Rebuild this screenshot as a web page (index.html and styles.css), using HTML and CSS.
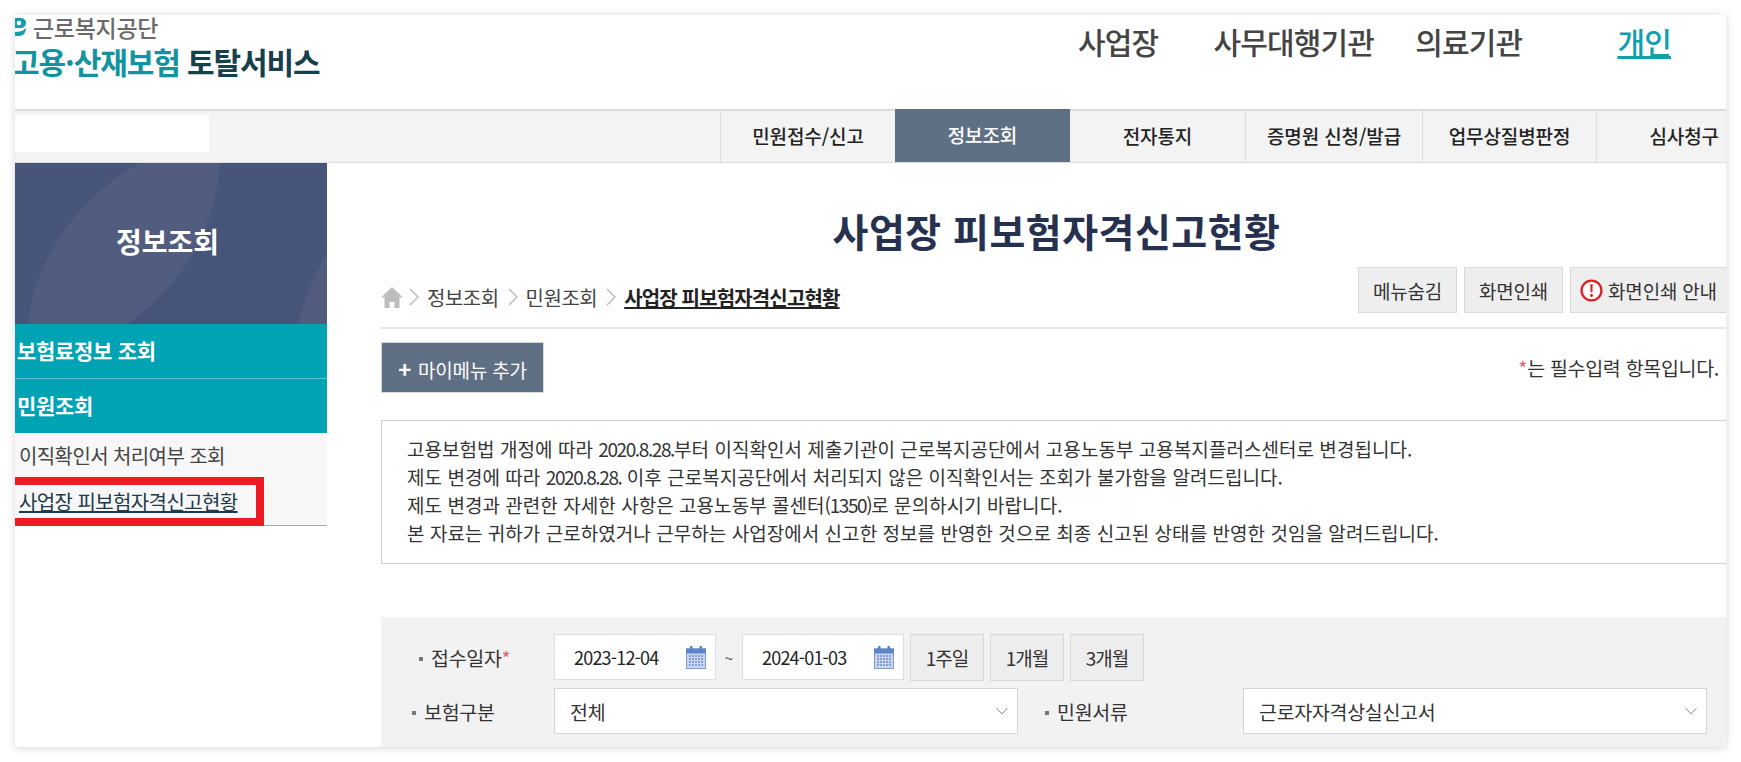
FILE: index.html
```html
<!DOCTYPE html>
<html lang="ko">
<head>
    <meta charset="UTF-8">
    <meta name="viewport" content="width=device-width, initial-scale=1.0">
    <title>사업장 피보험자격신고현황</title>
    <link rel="stylesheet" href="styles.css">
</head>
<body>
    <div class="page">
        <header class="top">
            <div class="logo">
                <div class="logo-org">
                    <svg class="logo-mark" width="11" height="20" viewBox="0 0 11 20">
                        <path d="M0 1h5c4 0 6 2 6 5s-2 4-4 5H0z" fill="#12a0ad"/>
                        <path d="M0 15c4 0 8-1 11-4 0 5-3 8-7 8H0z" fill="#12a0ad"/>
                        <circle cx="4" cy="6" r="2.2" fill="#fff"/>
                    </svg>
                    <span>근로복지공단</span>
                </div>
                <div class="logo-name"><span class="logo-teal">고용·산재보험</span> 토탈서비스</div>
            </div>
            <nav class="top-links">
                <a class="top-link link-biz">사업장</a>
                <a class="top-link link-agency">사무대행기관</a>
                <a class="top-link link-medical">의료기관</a>
                <a class="top-link link-person">개인</a>
            </nav>
        </header>

        <nav class="gnb">
            <div class="gnb-blank"></div>
            <ul class="gnb-list">
                <li class="gnb-item item-report">민원접수/신고</li>
                <li class="gnb-item item-info active">정보조회</li>
                <li class="gnb-item item-notice">전자통지</li>
                <li class="gnb-item item-proof">증명원 신청/발급</li>
                <li class="gnb-item item-disease">업무상질병판정</li>
                <li class="gnb-item item-claim">심사청구</li>
            </ul>
        </nav>

        <div class="body-wrap">
            <aside class="side">
                <div class="side-title">
                    <svg class="side-shape" width="312" height="161" viewBox="0 0 312 161">
                        <path d="M125 0C70 30 20 90 13 161H112C165 125 200 70 205 0z" fill="#525c7e"/>
                        <path d="M312 90C298 115 288 138 283 161H312z" fill="#525c7e"/>
                    </svg>
                    <span>정보조회</span>
                </div>
                <div class="side-head">보험료정보 조회</div>
                <div class="side-head side-head-last">민원조회</div>
                <ul class="side-sub">
                    <li>이직확인서 처리여부 조회</li>
                    <li class="side-current"><a>사업장 피보험자격신고현황</a></li>
                </ul>
            </aside>

            <main class="content">
                <h1 class="page-title">사업장 피보험자격신고현황</h1>

                <div class="tool-row">
                    <div class="crumbs">
                        <svg class="home" width="22" height="22" viewBox="0 0 22 22">
                            <path d="M11 1L0 11.5h3.500V22h5v-6h5v6h5V11.500H22z" fill="#bdbdbd"/>
                        </svg>
                        <svg class="crumb-arrow" width="10" height="18" viewBox="0 0 10 18"><path d="M1 1l8 8-8 8" fill="none" stroke="#bbb" stroke-width="1.500"/></svg>
                        <span>정보조회</span>
                        <svg class="crumb-arrow" width="10" height="18" viewBox="0 0 10 18"><path d="M1 1l8 8-8 8" fill="none" stroke="#bbb" stroke-width="1.500"/></svg>
                        <span>민원조회</span>
                        <svg class="crumb-arrow" width="10" height="18" viewBox="0 0 10 18"><path d="M1 1l8 8-8 8" fill="none" stroke="#bbb" stroke-width="1.500"/></svg>
                        <strong>사업장 피보험자격신고현황</strong>
                    </div>
                    <div class="tools">
                        <button class="tool-btn btn-hide">메뉴숨김</button>
                        <button class="tool-btn btn-print">화면인쇄</button>
                        <button class="tool-btn btn-guide">
                            <svg width="23" height="23" viewBox="0 0 22 22">
                                <circle cx="11" cy="11" r="9.500" fill="#fff" stroke="#e01f26" stroke-width="2.200"/>
                                <path d="M9.800 5h2.400l-.4 8h-1.600z" fill="#e01f26"/>
                                <circle cx="11" cy="15.800" r="1.400" fill="#e01f26"/>
                            </svg>
                            화면인쇄 안내
                        </button>
                    </div>
                </div>

                <div class="my-row">
                    <button class="my-btn"><b>+</b> 마이메뉴 추가</button>
                    <p class="req-note"><span class="req">*</span>는 필수입력 항목입니다.</p>
                </div>

                <div class="notice">
                    <p>고용보험법 개정에 따라 <span class="num">2020.8.28.</span>부터 이직확인서 제출기관이 근로복지공단에서 고용노동부 고용복지플러스센터로 변경됩니다.</p>
                    <p>제도 변경에 따라 <span class="num">2020.8.28.</span> 이후 근로복지공단에서 처리되지 않은 이직확인서는 조회가 불가함을 알려드립니다.</p>
                    <p>제도 변경과 관련한 자세한 사항은 고용노동부 콜센터<span class="num">(1350)</span>로 문의하시기 바랍니다.</p>
                    <p>본 자료는 귀하가 근로하였거나 근무하는 사업장에서 신고한 정보를 반영한 것으로 최종 신고된 상태를 반영한 것임을 알려드립니다.</p>
                </div>

                <form class="search">
                    <div class="search-row">
                        <label class="field-label label-date">접수일자<span class="req-star">*</span></label>
                        <div class="date-box">
                            <span>2023-12-04</span>
                            <svg width="20" height="23" viewBox="0 0 20 23">
                                <rect x="0.500" y="3" width="19" height="19.500" fill="#c9d6ee" stroke="#7f9ccf"/>
                                <rect x="0" y="2.500" width="20" height="5" fill="#5f85c8"/>
                                <rect x="4" y="0" width="2.500" height="5" fill="#5f85c8"/>
                                <rect x="13.500" y="0" width="2.500" height="5" fill="#5f85c8"/>
                                <path d="M3 10h14M3 13h14M3 16h14M3 19h14" stroke="#6f8fc8" stroke-width="1.500" stroke-dasharray="2 1"/>
                            </svg>
                        </div>
                        <span class="tilde">~</span>
                        <div class="date-box">
                            <span>2024-01-03</span>
                            <svg width="20" height="23" viewBox="0 0 20 23">
                                <rect x="0.500" y="3" width="19" height="19.500" fill="#c9d6ee" stroke="#7f9ccf"/>
                                <rect x="0" y="2.500" width="20" height="5" fill="#5f85c8"/>
                                <rect x="4" y="0" width="2.500" height="5" fill="#5f85c8"/>
                                <rect x="13.500" y="0" width="2.500" height="5" fill="#5f85c8"/>
                                <path d="M3 10h14M3 13h14M3 16h14M3 19h14" stroke="#6f8fc8" stroke-width="1.500" stroke-dasharray="2 1"/>
                            </svg>
                        </div>
                        <button type="button" class="period-btn">1주일</button>
                        <button type="button" class="period-btn">1개월</button>
                        <button type="button" class="period-btn">3개월</button>
                    </div>
                    <div class="search-row row-selects">
                        <label class="field-label label-type">보험구분</label>
                        <div class="select-box select-type">
                            <span>전체</span>
                            <svg width="12" height="8" viewBox="0 0 12 8"><path d="M.5 1l5.500 6 5.500-6" fill="none" stroke="#888" stroke-width="1"/></svg>
                        </div>
                        <label class="field-label label-doc">민원서류</label>
                        <div class="select-box select-doc">
                            <span>근로자자격상실신고서</span>
                            <svg width="12" height="8" viewBox="0 0 12 8"><path d="M.5 1l5.500 6 5.500-6" fill="none" stroke="#888" stroke-width="1"/></svg>
                        </div>
                    </div>
                </form>
            </main>
        </div>
    </div>
</body>
</html>
```

FILE: styles.css
```css
* {
    margin: 0;
    padding: 0;
    box-sizing: border-box;
    font-family: "Noto Sans CJK KR", "Noto Sans", sans-serif;
}

html, body {
    height: 100%;
    background-color: #ffffff;
    overflow: hidden;
}

body {
    padding: 15px;
}

ul {
    list-style: none;
}

button {
    cursor: pointer;
}

.page {
    width: 1711px;
    height: 732px;
    overflow: hidden;
    background-color: #fff;
    box-shadow: 0px 1px 8px rgba(0, 0, 0, 0.16);
}

/* header */
.top {
    display: flex;
    height: 96px;
    border-bottom: 2px solid #dddddd;
    overflow: hidden;
}

.logo {
    width: 420px;
    margin-left: -3px;
}

.logo-org {
    display: flex;
    align-items: center;
    height: 24px;
    font-size: 23px;
    font-weight: 500;
    line-height: 24px;
    letter-spacing: -0.3px;
    color: #6a6a6a;
}

.logo-mark {
    margin-left: 3px;
    margin-right: 7px;
}

.logo-name {
    margin-top: 3px;
    font-size: 30px;
    font-weight: 700;
    line-height: 38px;
    letter-spacing: -1.1px;
    color: #17404d;
}

.logo-teal {
    color: #13929f;
}

.top-links {
    display: flex;
    margin-left: auto;
}

.top-link {
    font-size: 30px;
    font-weight: 500;
    line-height: 52px;
    letter-spacing: -0.8px;
    color: #444444;
}

.link-biz {
    margin-right: 55px;
}

.link-agency {
    margin-right: 41px;
}

.link-medical {
    margin-right: 95px;
}

.link-person {
    margin-right: 55px;
    color: #0f9fad;
    text-decoration: underline;
}

/* main menu */
.gnb {
    display: flex;
    height: 52px;
    background-color: #f3f3f3;
    border-bottom: 1px solid #dddddd;
}

.gnb-blank {
    width: 194px;
    height: 37px;
    margin-top: 4px;
    background-color: #fff;
}

.gnb-list {
    display: flex;
    margin-left: auto;
}

.gnb-item {
    display: flex;
    align-items: center;
    justify-content: center;
    height: 51px;
    padding-bottom: 3px;
    border-left: 1px solid #dcdcdc;
    font-size: 19px;
    font-weight: 500;
    letter-spacing: -0.1px;
    color: #222;
}

.item-report { width: 175px; }
.item-notice { width: 175px; }
.item-proof { width: 177px; }
.item-disease { width: 174px; }
.item-claim {
    width: 130px;
    justify-content: flex-end;
    padding-right: 7px;
}

.item-info {
    width: 175px;
    margin-top: -2px;
    height: 53px;
}

.gnb-item.active {
    background-color: #5f7084;
    border-left: none;
    color: #fff;
}

.active + .gnb-item {
    border-left: none;
}

/* body */
.body-wrap {
    display: flex;
}

.side {
    width: 312px;
    flex-shrink: 0;
}

.side-title {
    position: relative;
    display: flex;
    align-items: center;
    justify-content: center;
    height: 161px;
    padding-bottom: 6px;
    padding-right: 7px;
    background-color: #48557a;
    font-size: 28px;
    font-weight: 700;
    letter-spacing: 0;
    color: #fff;
}

.side-shape {
    position: absolute;
    left: 0;
    top: 0;
}

.side-title span {
    position: relative;
}

.side-head {
    height: 55px;
    padding-left: 2px;
    background-color: #00a3b4;
    border-bottom: 1px solid #5cc2cc;
    font-size: 21px;
    font-weight: 700;
    line-height: 53px;
    letter-spacing: -0.3px;
    color: #fff;
}

.side-head-last {
    border-bottom: none;
    height: 54px;
}

.side-sub {
    position: relative;
    height: 93px;
    background-color: #f7f7f7;
    border-bottom: 1px solid #aaaaaa;
    font-size: 20px;
    color: #444;
    letter-spacing: -0.6px;
}

.side-sub li {
    height: 46px;
    padding-left: 4px;
    line-height: 46px;
}

.side-current {
    position: relative;
    color: #1d3a4a;
}

.side-current a {
    text-decoration: underline;
}

.side-current::after {
    content: "";
    position: absolute;
    left: -1px;
    top: -2px;
    width: 250px;
    height: 49px;
    box-sizing: border-box;
    border: 8px solid #ed1c24;
    border-left-width: 0;
}

/* content */
.content {
    flex: 1;
    min-width: 0;
    padding-left: 54px;
}

.page-title {
    height: 46px;
    margin-top: 44px;
    padding-left: 6px;
    text-align: center;
    font-size: 39px;
    font-weight: 700;
    line-height: 46px;
    letter-spacing: 0.5px;
    color: #26304f;
}

.tool-row {
    display: flex;
    justify-content: space-between;
    height: 62px;
    margin-top: 14px;
    border-bottom: 2px solid #e6e6e6;
}

.crumbs {
    display: flex;
    align-items: center;
    height: 60px;
    font-size: 20px;
    letter-spacing: -0.5px;
    color: #444;
}

.crumbs strong {
    font-weight: 700;
    letter-spacing: -0.85px;
    color: #222;
    text-decoration: underline;
}

.home {
    margin-right: 6px;
}

.crumb-arrow {
    margin-right: 8px;
}

.crumbs span {
    margin-right: 9px;
}

.tools {
    display: flex;
    gap: 7px;
}

.tool-btn {
    display: flex;
    align-items: center;
    justify-content: center;
    height: 46px;
    background-color: #eeeeee;
    border: 1px solid #d8d8d8;
    font-size: 19px;
    letter-spacing: -0.2px;
    color: #333;
}

.btn-hide,
.btn-print {
    width: 99px;
}

.btn-guide {
    width: 156px;
    gap: 5px;
    border-right: none;
}

.my-row {
    display: flex;
    justify-content: space-between;
    align-items: center;
    margin-top: 13px;
}

.my-btn {
    width: 163px;
    height: 51px;
    background-color: #5f7084;
    border: 1px solid #d5d9de;
    font-size: 19px;
    letter-spacing: -0.2px;
    color: #fff;
}

.my-btn b {
    font-size: 22px;
    margin-right: 2px;
}

.req-note {
    margin-right: 7px;
    margin-top: -1px;
    font-size: 19.500px;
    letter-spacing: -0.3px;
    color: #333;
}

.req {
    color: #e0636a;
}

.notice {
    height: 144px;
    margin-top: 27px;
    padding: 14px 25px;
    border: 1px solid #cfcfcf;
    border-right: none;
    font-size: 19px;
    line-height: 28px;
    letter-spacing: 0.04px;
    color: #333;
}

.num {
    letter-spacing: -1.4px;
}

.search {
    height: 131px;
    margin-top: 53px;
    padding-top: 17px;
    background-color: #f2f2f2;
}

.search-row {
    display: flex;
    align-items: center;
    height: 46px;
}

.row-selects {
    margin-top: 8px;
}

.field-label {
    position: relative;
    font-size: 19.500px;
    letter-spacing: -0.3px;
    color: #333;
}

.field-label::before {
    content: "";
    position: absolute;
    left: -12px;
    top: 14px;
    width: 4px;
    height: 4px;
    background-color: #777;
}

.label-date {
    width: 173px;
    padding-left: 50px;
}

.label-date::before {
    left: 38px;
}

.req-star {
    color: #e0636a;
}

.label-type {
    width: 173px;
    padding-left: 43px;
}

.label-type::before {
    left: 31px;
}

.label-doc {
    width: 225px;
    padding-left: 39px;
}

.label-doc::before {
    left: 27px;
}

.date-box {
    display: flex;
    align-items: center;
    justify-content: space-between;
    width: 162px;
    height: 46px;
    padding: 0 9px 0 19px;
    background-color: #fff;
    border: 1px solid #dddddd;
    font-size: 18px;
    letter-spacing: -0.8px;
    color: #222;
}

.tilde {
    width: 26px;
    text-align: center;
    font-size: 15px;
    color: #444;
}

.period-btn {
    width: 74px;
    height: 47px;
    margin-left: 6px;
    background-color: #eeeeee;
    border: 1px solid #d8d8d8;
    font-size: 19px;
    letter-spacing: -1px;
    color: #333;
}

.select-box {
    display: flex;
    align-items: center;
    justify-content: space-between;
    height: 46px;
    padding: 0 9px 0 15px;
    background-color: #fff;
    border: 1px solid #d5d5d5;
    font-size: 19.500px;
    letter-spacing: -0.3px;
    color: #333;
}

.select-type {
    width: 464px;
}

.select-doc {
    width: 464px;
}
```
